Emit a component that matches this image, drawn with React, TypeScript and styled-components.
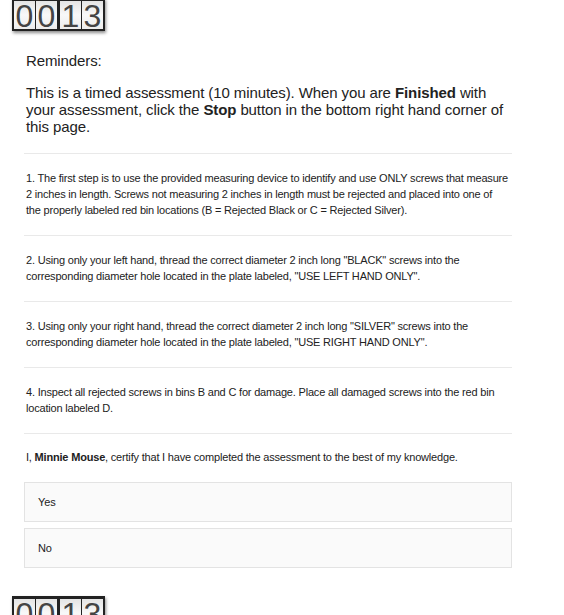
import React from 'react'
import styled, { createGlobalStyle } from 'styled-components'

const GlobalStyle = createGlobalStyle`
  html, body {
    margin: 0;
    padding: 0;
    background: #fff;
  }
  body {
    font-family: 'Liberation Sans', Arial, sans-serif;
    color: #222;
  }
`

const Page = styled.div`
  width: 564px;
  height: 615px;
  overflow: hidden;
  display: flex;
  flex-direction: column;
`

const CounterRow = styled.div<{ $offset: number }>`
  padding-left: 12px;
  margin-top: ${(p) => p.$offset}px;
`

const Counter = styled.div`
  display: inline-flex;
  gap: 1px;
  background: #222;
  border: 2px solid #222;
  border-top-width: 3px;
  box-shadow: 1px 2px 3px rgba(0, 0, 0, 0.45);
`

const Digit = styled.span<{ $gap?: boolean }>`
  width: 21px;
  height: 28px;
  margin-left: ${(p) => (p.$gap ? '2px' : '0')};
  background: linear-gradient(#e4e4e4, #f8f8f8 50%, #ececec);
  color: #444;
  font-size: 32px;
  line-height: 30px;
  text-align: center;
  font-family: 'Liberation Sans', Arial, sans-serif;
  overflow: hidden;
`

const Content = styled.div`
  margin-left: 24px;
  width: 488px;
`

const Lead = styled.div`
  padding: 0 2px;
  font-size: 15px;
  letter-spacing: -0.1px;
  line-height: 17px;
  margin-top: 21px;

  p {
    margin: 0 0 15px;
  }

  p:last-child {
    margin-bottom: 18px;
  }
`

const Step = styled.div`
  border-top: 1px solid #e9e9e9;
  padding: 16px 3px 17px 2px;
  font-size: 11px;
  letter-spacing: -0.19px;
  line-height: 16px;
`

const Certify = styled(Step)`
  padding-top: 15px;
  padding-bottom: 17px;
`

const Choice = styled.div`
  border: 1px solid #e3e3e3;
  background: #fafafa;
  padding: 12px 13px;
  font-size: 11px;
  letter-spacing: -0.1px;
  line-height: 14px;
  margin-bottom: 6px;
`

const Digits = ({ value }: { value: string }) => (
  <Counter>
    {value.split('').map((d, i) => (
      <Digit key={i} $gap={i === 2}>
        {d}
      </Digit>
    ))}
  </Counter>
)

const steps = [
  '1. The first step is to use the provided measuring device to identify and use ONLY screws that measure 2 inches in length. Screws not measuring 2 inches in length must be rejected and placed into one of the properly labeled red bin locations (B = Rejected Black or C = Rejected Silver).',
  '2. Using only your left hand, thread the correct diameter 2 inch long "BLACK" screws into the corresponding diameter hole located in the plate labeled, "USE LEFT HAND ONLY".',
  '3. Using only your right hand, thread the correct diameter 2 inch long "SILVER" screws into the corresponding diameter hole located in the plate labeled, "USE RIGHT HAND ONLY".',
  '4. Inspect all rejected screws in bins B and C for damage. Place all damaged screws into the red bin location labeled D.',
]

export default function App() {
  return (
    <Page>
      <GlobalStyle />
      <CounterRow $offset={-2}>
        <Digits value="0013" />
      </CounterRow>
      <Content>
        <Lead>
          <p>Reminders:</p>
          <p>
            This is a timed assessment (10 minutes). When you are{' '}
            <b>Finished</b> with your assessment, click the <b>Stop</b> button
            in the bottom right hand corner of this page.
          </p>
        </Lead>
        {steps.map((s) => (
          <Step key={s}>{s}</Step>
        ))}
        <Certify>
          I, <b>Minnie Mouse</b>, certify that I have completed the assessment
          to the best of my knowledge.
        </Certify>
        <Choice>Yes</Choice>
        <Choice>No</Choice>
      </Content>
      <CounterRow $offset={22}>
        <Digits value="0013" />
      </CounterRow>
    </Page>
  )
}
